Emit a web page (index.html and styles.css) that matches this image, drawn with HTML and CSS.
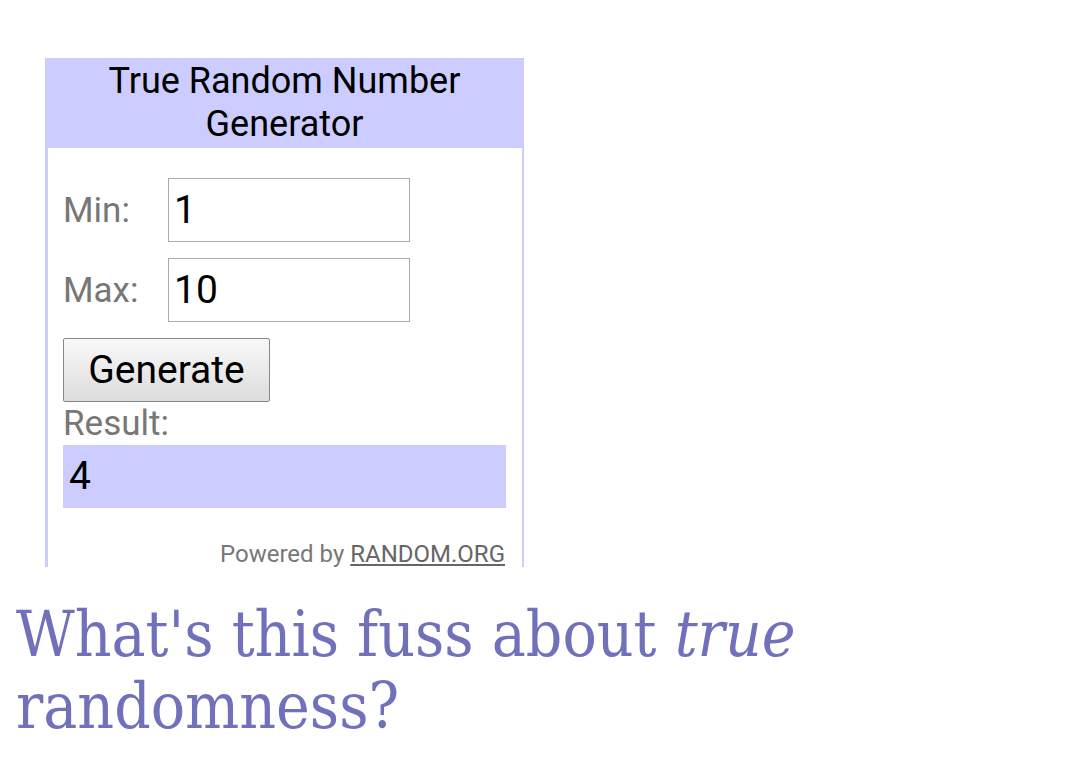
FILE: index.html
```html
<!DOCTYPE HTML>
<html lang=en>
	<head>
		<meta charset="UTF-8">
		<link rel="stylesheet" href="styles.css">
	</head>
	<body>
		<div class="widget">
			<div class="widget-title">True Random Number Generator</div>
			<div class="widget-body">
				<div class="row"><label for=min>Min:</label><input id=min value="1"></div>
				<div class="row"><label for=max>Max:</label><input id=max value="10"></div>
				<button class="generate">Generate</button>
				<div class="result-label">Result:</div>
				<div class="result">4</div>
				<div class="powered">Powered by <a href="#">RANDOM.ORG</a></div>
			</div>
		</div>

		<h2 class="fuss">What's this fuss about <i>true</i> randomness?</h2>
	</body>
</html>
```

FILE: styles.css
```css
html {
	font-family: Roboto, "Liberation Sans", sans-serif;
}
body {
	margin: 0;
	padding: 0 16px;
}

/* rng widget */
.widget {
	width: 474px;
	margin: 58px 0 0 29px;
	border-left: solid 3px #ccccff;
	border-right: solid 2px #ccccff;
}
.widget-title {
	background: #ccccff;
	margin: 0 -2px 0 -3px;
	padding: 2px 20px;
	text-align: center;
	font-size: 36px;
	line-height: 43px;
	color: #000;
}
.widget-body {
	padding: 30px 16px 0 15px;
	display: flex;
	flex-direction: column;
	align-items: flex-start;
}
.row {
	display: flex;
	align-items: center;
	margin-bottom: 16px;
}
.row label {
	width: 105px;
	font-size: 35px;
	color: #777;
}
.row input {
	box-sizing: border-box;
	width: 242px;
	height: 64px;
	border: solid 1px #aaa;
	padding: 0 5px;
	font: 39px Roboto, sans-serif;
	color: #000;
}
.generate {
	box-sizing: border-box;
	width: 207px;
	height: 64px;
	font: 39px Roboto, sans-serif;
	color: #000;
	border: solid 1px #888;
	border-radius: 2px;
	background: linear-gradient(#f9f9f9, #dcdcdc);
	padding: 0;
}
.result-label {
	font-size: 35px;
	line-height: 43px;
	color: #777;
}
.result {
	box-sizing: border-box;
	align-self: stretch;
	height: 63px;
	background: #ccccff;
	padding-left: 6px;
	font-size: 39px;
	line-height: 63px;
	color: #000;
}
.powered {
	align-self: flex-end;
	margin: 33px 1px 0 0;
	font-size: 24px;
	line-height: 26px;
	color: #777;
}
.powered a { color: #666; }

.fuss {
	margin: 31px 0 0 0;
	font-family: "DejaVu Serif Condensed", "DejaVu Serif", serif;
	font-weight: normal;
	font-size: 63.5px;
	line-height: 72px;
	color: #7070bb;
}
```
